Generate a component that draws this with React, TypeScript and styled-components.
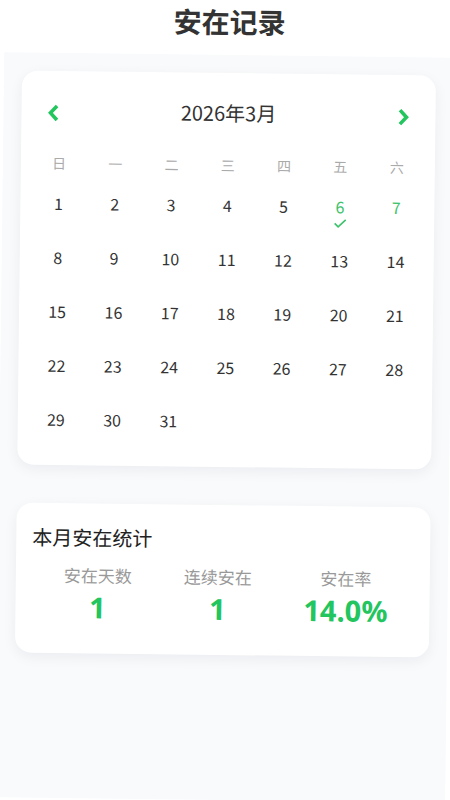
import React from 'react';
import styled, { createGlobalStyle } from 'styled-components';

const GREEN = '#22c55e';
const DAY_GREEN = '#3cc26a';

const GlobalStyle = createGlobalStyle`
  html, body {
    margin: 0;
    padding: 0;
    background: #fff;
  }
  body {
    font-family: "Noto Sans CJK SC", "Noto Sans", sans-serif;
    overflow: hidden;
  }
  * { box-sizing: border-box; }
`;

// the whole screen is photographed slightly tilted
const Screen = styled.div`
  width: 450px;
  height: 800px;
  display: flex;
  flex-direction: column;
  transform: rotate(0.7deg);
  transform-origin: 50% 50%;
`;

const Title = styled.h1`
  margin: 0 0 15px;
  padding-top: 2px;
  line-height: 38px;
  text-align: center;
  font-size: 28px;
  font-weight: 700;
  color: #333;
`;

const Body = styled.main`
  flex: 1;
  background: #f8fafc;
  padding: 18px;
  display: flex;
  flex-direction: column;
  gap: 38px;
`;

const Card = styled.section`
  background: #fff;
  border-radius: 16px;
  box-shadow: 0 4px 14px rgba(15, 23, 42, 0.06);
`;

const CalendarCard = styled(Card)`
  padding: 20px 10px 18px;
`;

const Header = styled.div`
  height: 40px;
  display: flex;
  align-items: center;
  justify-content: space-between;
  padding: 0 16px;
`;

const MonthLabel = styled.div`
  font-size: 20px;
  line-height: 40px;
  color: #333;
`;

const ArrowButton = styled.button`
  border: none;
  background: none;
  padding: 0;
  margin-top: 4px;
  width: 12px;
  height: 18px;
  display: flex;
  cursor: pointer;
`;

const WeekRow = styled.div`
  display: grid;
  grid-template-columns: repeat(7, 1fr);
  align-items: center;
  height: 28px;
  margin-top: 18px;
`;

const WeekDay = styled.div`
  text-align: center;
  font-size: 14px;
  color: #aaa;
`;

const DayGrid = styled.div`
  display: grid;
  grid-template-columns: repeat(7, 1fr);
  grid-auto-rows: 54px;
`;

const DayCell = styled.div`
  display: flex;
  flex-direction: column;
  align-items: center;
  padding-top: 14px;
`;

const DayNum = styled.span<{ $green?: boolean }>`
  font-size: 16px;
  line-height: 24px;
  color: ${p => (p.$green ? DAY_GREEN : '#333')};
`;

const StatsCard = styled(Card)`
  padding: 20px 16px 30px;
`;

const StatsTitle = styled.h2`
  margin: 0;
  font-size: 20px;
  line-height: 28px;
  font-weight: 400;
  color: #222;
`;

const StatRow = styled.div`
  display: flex;
  justify-content: space-around;
  margin-top: 12px;
  padding-left: 6px;
`;

const StatItem = styled.div`
  display: flex;
  flex-direction: column;
  align-items: center;
  gap: 4px;
`;

const StatLabel = styled.div`
  font-size: 17px;
  line-height: 24px;
  color: #999;
`;

const StatValue = styled.div`
  font-family: "Noto Sans", "Noto Sans CJK SC", sans-serif;
  font-size: 29px;
  line-height: 32px;
  font-weight: 700;
  color: ${GREEN};
`;

const Chevron = ({ dir }: { dir: 'left' | 'right' }) => (
  <svg width="12" height="18" viewBox="0 0 12 18">
    <polyline
      points={dir === 'left' ? '9.5,2 3,9 9.5,16' : '2.5,2 9,9 2.5,16'}
      fill="none"
      stroke={GREEN}
      strokeWidth="3.6"
      strokeLinejoin="miter"
    />
  </svg>
);

const Check = () => (
  <svg width="14" height="10" viewBox="0 0 14 10">
    <polyline points="1.5,5 5,8.5 12.5,1.5" fill="none" stroke={DAY_GREEN} strokeWidth="1.6" />
  </svg>
);

const WEEK = ['日', '一', '二', '三', '四', '五', '六'];
const DAYS = Array.from({ length: 31 }, (_, i) => i + 1);
const SAFE_DAYS = [6];
const TODAY = 7;

const stats = [
  { label: '安在天数', value: '1' },
  { label: '连续安在', value: '1' },
  { label: '安在率', value: '14.0%' },
];

const App = () => (
  <>
    <GlobalStyle />
    <Screen>
      <Title>安在记录</Title>
      <Body>
        <CalendarCard>
          <Header>
            <ArrowButton aria-label="上个月"><Chevron dir="left" /></ArrowButton>
            <MonthLabel>2026年3月</MonthLabel>
            <ArrowButton aria-label="下个月"><Chevron dir="right" /></ArrowButton>
          </Header>
          <WeekRow>
            {WEEK.map(w => <WeekDay key={w}>{w}</WeekDay>)}
          </WeekRow>
          <DayGrid>
            {DAYS.map(d => {
              const safe = SAFE_DAYS.includes(d);
              return (
                <DayCell key={d}>
                  <DayNum $green={safe || d === TODAY}>{d}</DayNum>
                  {safe && <Check />}
                </DayCell>
              );
            })}
          </DayGrid>
        </CalendarCard>

        <StatsCard>
          <StatsTitle>本月安在统计</StatsTitle>
          <StatRow>
            {stats.map(s => (
              <StatItem key={s.label}>
                <StatLabel>{s.label}</StatLabel>
                <StatValue>{s.value}</StatValue>
              </StatItem>
            ))}
          </StatRow>
        </StatsCard>
      </Body>
    </Screen>
  </>
);

export default App;
